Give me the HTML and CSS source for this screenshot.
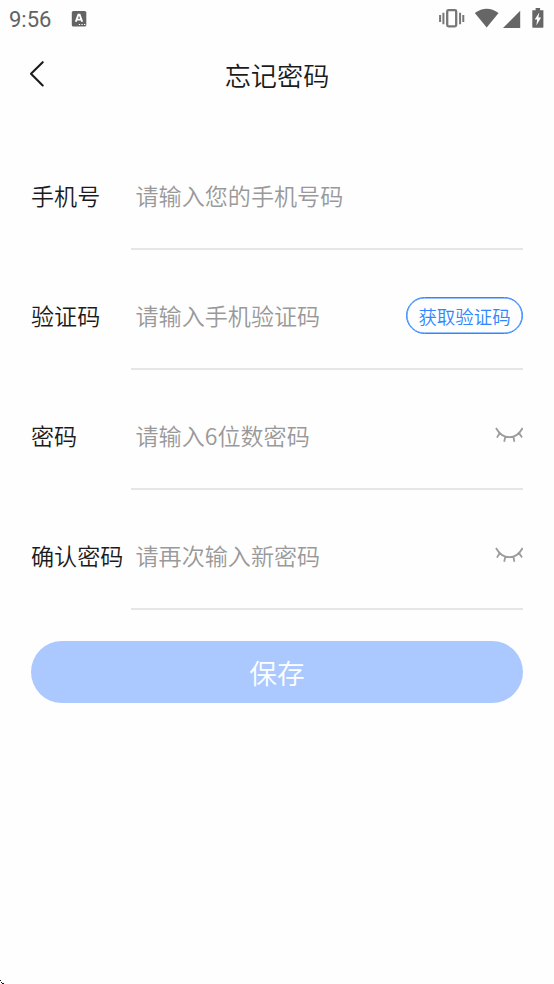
FILE: index.html
```html
<!DOCTYPE html>
<html lang="zh-CN">
<head>
<meta charset="utf-8">
<title>忘记密码</title>
<link rel="stylesheet" href="styles.css">
</head>
<body>
<div class="status">
  <span class="time">9:56</span>
  <svg class="app" width="16" height="18" viewBox="0 0 16 18"><rect x=".8" y="1" width="14.5" height="15.6" rx="1.6" fill="#636363"/><path d="M4.8 11.8 7.4 4.6h1.2l2.6 7.2M5.8 9.6h4.4" fill="none" stroke="#fff" stroke-width="1.9"/><path d="M7.8 14.5h1.3M10.4 14.5h1.3M13 14.5h1.3" stroke="#fff" stroke-width="1.2"/></svg>
  <svg class="signals" width="124" height="38" viewBox="0 0 124 38">
    <g fill="none" stroke="#777" stroke-width="2"><rect x="17.2" y="10.1" width="9" height="16.2" rx="1.3" stroke-width="2.3"/><path d="M10.1 15v7M13.4 12.8v11.4M30.1 12.8v11.4M33.3 15v7"/></g>
    <path d="M44.8 13.1Q56.7 4.5 68.6 13.1L56.7 27.4Z" fill="#666"/>
    <path d="M90.2 10.7v17.2H73Z" fill="#666"/>
    <path d="M102.3 10.2h3.3V8h4.5v2.2h3.3v16.9q0 .7-.7.7h-9.7q-.7 0-.7-.7Z" fill="#666"/><path d="m109.3 12.4-4.6 7h2.5l-.9 6 4.8-7.8h-2.7Z" fill="#fff"/>
  </svg>
</div>
<header class="nav">
  <svg class="back" width="20" height="30" viewBox="0 0 20 30"><path d="M15.7 3.2 4 14.8l11.7 11.7" fill="none" stroke="#1b1b1b" stroke-width="2.1" stroke-linecap="round" stroke-linejoin="round"/></svg>
  <h1 class="title">忘记密码</h1>
</header>
<main class="form">
  <div class="row"><span class="label">手机号</span><div class="field"><span class="hint">请输入您的手机号码</span></div></div>
  <div class="row"><span class="label">验证码</span><div class="field"><span class="hint">请输入手机验证码</span><button class="code">获取验证码</button></div></div>
  <div class="row"><span class="label">密码</span><div class="field"><span class="hint">请输入6位数密码</span>
    <svg class="eye" width="28" height="18" viewBox="0 0 28 18"><path d="M1 2Q6 11.2 14.3 11.2T27.6 2M4.8 6.8 2 11.6M10.3 10.8 9.2 15.8M18.4 10.8l1 5M24 6.8l3 4.8" fill="none" stroke="#9c9c9c" stroke-width="1.8"/></svg></div></div>
  <div class="row"><span class="label">确认密码</span><div class="field"><span class="hint">请再次输入新密码</span>
    <svg class="eye" width="28" height="18" viewBox="0 0 28 18"><path d="M1 2Q6 11.2 14.3 11.2T27.6 2M4.8 6.8 2 11.6M10.3 10.8 9.2 15.8M18.4 10.8l1 5M24 6.8l3 4.8" fill="none" stroke="#9c9c9c" stroke-width="1.8"/></svg></div></div>
  <button class="save">保存</button>
</main>
<svg class="corner" width="4" height="4" viewBox="0 0 4 4"><path d="M0 0h1v1H0zM1 2h1v1H1zM2 3h2v1H2z" fill="#111"/></svg>
</body>
</html>
```
FILE: styles.css
```css
* { box-sizing: border-box; }
body {
  margin: 0;
  height: 984px;
  overflow: hidden;
  position: relative;
  background: #fefefe;
  color: #1b1b1b;
  font-family: "Noto Sans CJK SC", sans-serif;
  font-weight: 350;
}
.status {
  display: flex;
  height: 38px;
  padding: 0 0 0 9px;
  align-items: center;
  color: #636363;
}
.time { width: 62px; padding-top: 2px; font: 400 22px/24px Roboto, sans-serif; }
.app { margin-top: -1px; }
.signals { margin-left: auto; }
.nav {
  display: flex;
  height: 74px;
  padding: 0 27px;
  align-items: center;
}
.back { margin-top: -3px; }
.title {
  flex: 1;
  margin: 0 20px 0 0;
  text-align: center;
  font-size: 26.15px;
  line-height: 38px;
  font-weight: 350;
}
.form { padding: 18px 31px 0; }
.row { display: flex; height: 120px; }
.label {
  width: 100px;
  padding-top: 48px;
  font-size: 23.08px;
  line-height: 34px;
  white-space: nowrap;
}
.field {
  display: flex;
  flex: 1;
  height: 120px;
  padding: 12px 0 0 4.5px;
  align-items: center;
  border-bottom: 2px solid #e6e6e6;
}
.hint { flex: 1; font-size: 23.08px; line-height: 34px; color: #999; }
.code {
  width: 117px;
  height: 37px;
  padding: 1px 0 0;
  border: 1px solid #2f86ff;
  border-radius: 19px;
  box-shadow: inset 0 0 0 .5px #2f86ff;
  background: transparent;
  color: #2f86ff;
  font: 350 18.46px/35px "Noto Sans CJK SC", sans-serif;
}
.save {
  display: block;
  width: 492px;
  height: 62px;
  margin-top: 31px;
  padding: 0;
  border: 0;
  border-radius: 31px;
  background: #abc9ff;
  color: #fff;
  font: 350 27.7px/62px "Noto Sans CJK SC", sans-serif;
}
.corner { position: absolute; left: 0; bottom: 0; }
```
